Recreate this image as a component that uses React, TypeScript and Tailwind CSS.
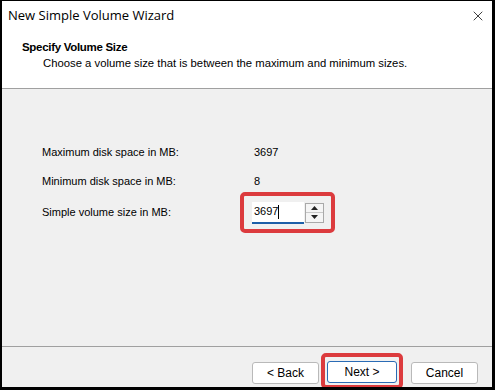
import { X } from "lucide-react";

const rows = [
  { label: "Maximum disk space in MB:", value: "3697" },
  { label: "Minimum disk space in MB:", value: "8" },
];

const WizardButton = ({ children, focused }: { children: string; focused?: boolean }) => (
  <button
    className={`${focused ? "w-[70px] border-[#2a6bb5]" : "w-[67px] border-[#b9b9b9]"} h-[22px] rounded-[3px] bg-white text-[12px] text-black border`}
  >
    {children}
  </button>
);

export default function App() {
  return (
    <div className="w-[495px] h-[390px] bg-black pl-[2px] pt-[1px] pr-[3px] pb-[3px] font-['Liberation_Sans',Arial,sans-serif]">
      <div className="w-full h-full flex flex-col bg-[#f0f0f0] overflow-hidden">
        <div className="bg-white h-[88px] flex flex-col border-b border-[#a0a0a0]">
          <div className="h-[30px] flex items-center justify-between pl-[6px] pr-[6px]">
            <span className="font-['Open_Sans',sans-serif] text-[13px] text-black">New Simple Volume Wizard</span>
            <X className="w-[16px] h-[16px] text-[#222]" strokeWidth={1.3} />
          </div>
          <div className="pl-[20px] pt-[9px]">
            <div className="text-[11.5px] font-bold text-black leading-[15px] tracking-[-0.3px]">Specify Volume Size</div>
            <div className="pl-[21px] text-[11.3px] text-black leading-[16px]">
              Choose a volume size that is between the maximum and minimum sizes.
            </div>
          </div>
        </div>

        <div className="flex-1 pl-[40px] pt-[55px] text-[11px] text-black">
          {rows.map((r) => (
            <div key={r.label} className="flex h-[29px] items-start">
              <span className="w-[212px]">{r.label}</span>
              <span>{r.value}</span>
            </div>
          ))}
          <div className="flex items-center -mt-[10px]">
            <span className="w-[198px]">Simple volume size in MB:</span>
            <div className="border-[4px] border-[#dc3b3e] rounded-[5px] w-[95px] h-[41px] flex items-center pl-[8px] gap-[1px]">
              <div className="w-[52px] h-[22px] bg-white border-b-2 border-[#1d5fa8] flex items-center pl-[2px]">
                <span>3697</span>
                <span className="w-px h-[14px] bg-black" />
              </div>
              <div className="flex flex-col w-[19px] h-[20px] border border-[#a9a9a9] bg-[#f5f5f5]">
                <div className="flex-1 flex items-center justify-center border-b border-[#c8c8c8]">
                  <svg width="7" height="4" viewBox="0 0 7 4"><path d="M0 4 L3.5 0 L7 4Z" fill="#222" /></svg>
                </div>
                <div className="flex-1 flex items-center justify-center">
                  <svg width="7" height="4" viewBox="0 0 7 4"><path d="M0 0 L3.5 4 L7 0Z" fill="#222" /></svg>
                </div>
              </div>
            </div>
          </div>
        </div>

        <div className="h-[41px] shrink-0 border-t border-[#a0a0a0] flex items-start pt-[6px] justify-end pr-[14px]">
          <div className="pt-[7px]">
            <WizardButton>{"< Back"}</WizardButton>
          </div>
          <div className="border-[4px] border-[#dc3b3e] rounded-[5px] p-[2px] ml-[2px] mr-[2px]">
            <WizardButton focused>{"Next >"}</WizardButton>
          </div>
          <div className="pt-[7px] ml-[6px]">
            <WizardButton>Cancel</WizardButton>
          </div>
        </div>
      </div>
    </div>
  );
}
